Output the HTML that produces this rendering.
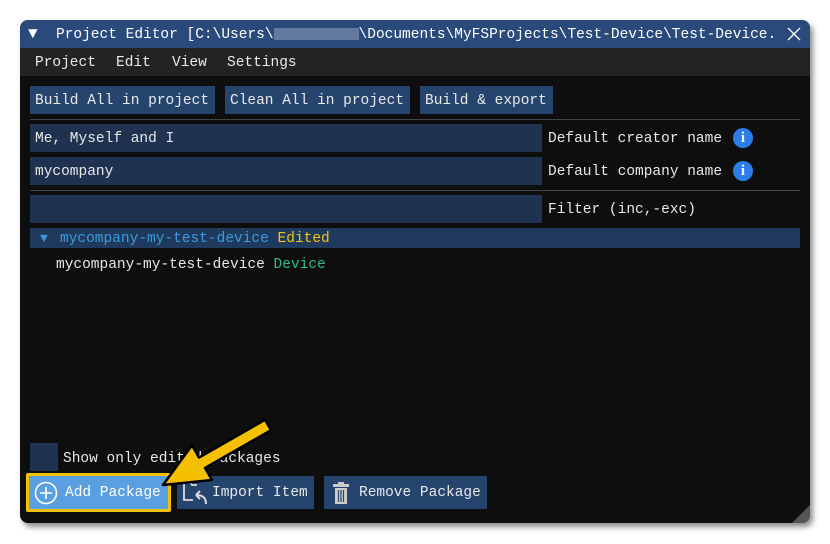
<!DOCTYPE html>
<html><head><style>
*{margin:0;padding:0;box-sizing:border-box}
body{width:830px;height:544px;background:#fff;position:relative;overflow:hidden;font-family:"Liberation Mono",monospace;font-size:14.5px;color:#e8e8e8}
.win{position:absolute;left:20px;top:20px;width:790px;height:503px;background:#0e0e0e;border-radius:8px;overflow:hidden;box-shadow:3px 4px 6px rgba(0,0,0,.45)}
.a{position:absolute;white-space:nowrap}
.title{left:0;top:0;width:790px;height:28px;background:#294a7a;color:#fff;line-height:31px}
.menu{left:0;top:28px;width:790px;height:28px;background:#232323;line-height:31px}
.btn{background:#26456e;height:28px;line-height:31px;padding-left:5px}
.inp{background:#1f3250;height:28px;line-height:31px;padding-left:5px}
.info{width:20px;height:20px;border-radius:50%;background:#2b7de9;color:#fff;font-family:"Liberation Serif",serif;font-weight:bold;text-align:center;line-height:20px;font-size:15px}
.sep{height:1px;background:#444}
</style></head><body>
<div class="win">
<div class="a title"><span style="position:absolute;left:8px;top:-1px;font-size:16px">▼</span><span style="position:absolute;left:36px">Project Editor [C:\Users\<span style="display:inline-block;width:85px;height:12px;background:#8a99b4;opacity:.6;vertical-align:middle"></span>\Documents\MyFSProjects\Test-Device\Test-Device.</span><svg style="position:absolute;left:767px;top:7px" width="14" height="14"><path d="M1 1L13 13M13 1L1 13" stroke="#fff" stroke-width="1.3"/></svg></div>
<div class="a menu"><span style="position:absolute;left:15px">Project</span><span style="position:absolute;left:96px">Edit</span><span style="position:absolute;left:152px">View</span><span style="position:absolute;left:207px">Settings</span></div>
<div class="a btn" style="left:10px;top:66px;width:185px">Build All in project</div>
<div class="a btn" style="left:205px;top:66px;width:185px">Clean All in project</div>
<div class="a btn" style="left:400px;top:66px;width:133px">Build &amp; export</div>
<div class="a sep" style="left:10px;top:99px;width:770px"></div>
<div class="a inp" style="left:10px;top:104px;width:512px">Me, Myself and I</div>
<div class="a" style="left:528px;top:104px;line-height:31px">Default creator name</div>
<div class="a info" style="left:713px;top:108px">i</div>
<div class="a inp" style="left:10px;top:137px;width:512px">mycompany</div>
<div class="a" style="left:528px;top:137px;line-height:31px">Default company name</div>
<div class="a info" style="left:713px;top:141px">i</div>
<div class="a sep" style="left:10px;top:170px;width:770px"></div>
<div class="a inp" style="left:10px;top:175px;width:512px"></div>
<div class="a" style="left:528px;top:175px;line-height:31px">Filter (inc,-exc)</div>
<div class="a" style="left:10px;top:208px;width:770px;height:20px;background:#1f3a5c;line-height:23px"><span style="position:absolute;left:10px;top:-1px;color:#3b9ad9;font-size:13px">▼</span><span style="position:absolute;left:30px;color:#3b9ad9">mycompany-my-test-device <span style="color:#f0c419">Edited</span></span></div>
<div class="a" style="left:36px;top:235px;line-height:20px">mycompany-my-test-device <span style="color:#2ebd85">Device</span></div>
<div class="a" style="left:10px;top:423px;width:28px;height:28px;background:#1f3250"></div>
<div class="a" style="left:43px;top:429px;line-height:20px">Show only edited packages</div>
<div class="a" style="left:6px;top:453px;width:145px;height:39px;border:3px solid #f5c000;border-radius:2px"></div>
<div class="a btn" style="left:9px;top:456px;width:139px;height:33px;line-height:35px;background:#5a9fe0;padding-left:36px;color:#fff">Add Package</div>
<svg class="a" style="left:14px;top:461px" width="24" height="24"><circle cx="12" cy="12" r="10.5" fill="none" stroke="#fff" stroke-width="1.6"/><path d="M12 6v12M6 12h12" stroke="#fff" stroke-width="1.6"/></svg>
<div class="a btn" style="left:157px;top:456px;width:137px;height:33px;line-height:35px;padding-left:35px">Import Item</div>
<svg class="a" style="left:161px;top:460px" width="28" height="26"><path d="M3 2h6l2 3h5M3 2v18h9" fill="none" stroke="#ddd" stroke-width="1.8"/><path d="M25 24c0-7-4-9-10-9M15 15l4-4M15 15l4 4" fill="none" stroke="#ddd" stroke-width="2"/></svg>
<div class="a btn" style="left:304px;top:456px;width:163px;height:33px;line-height:35px;padding-left:35px">Remove Package</div>
<svg class="a" style="left:312px;top:462px" width="18" height="22"><rect x="1" y="2" width="16" height="3" fill="#ccc"/><rect x="6" y="0" width="6" height="2" fill="#ccc"/><path d="M3 6h12v16H3z" fill="#ccc"/><path d="M6.5 8v12M9 8v12M11.5 8v12" stroke="#26456e" stroke-width="1.2"/></svg>
<div class="a" style="left:772px;top:485px;width:0;height:0;border-left:18px solid transparent;border-bottom:18px solid #555"></div>
</div>
<svg class="a" style="left:0;top:0" width="830" height="544"><path d="M265 419.8 L199 457.5 L192 445.3 L163 485 L212 480 L205 467.9 L271 430.2 Z" fill="#f5c000" stroke="#000" stroke-width="2.5" stroke-linejoin="round"/></svg>
</body></html>
